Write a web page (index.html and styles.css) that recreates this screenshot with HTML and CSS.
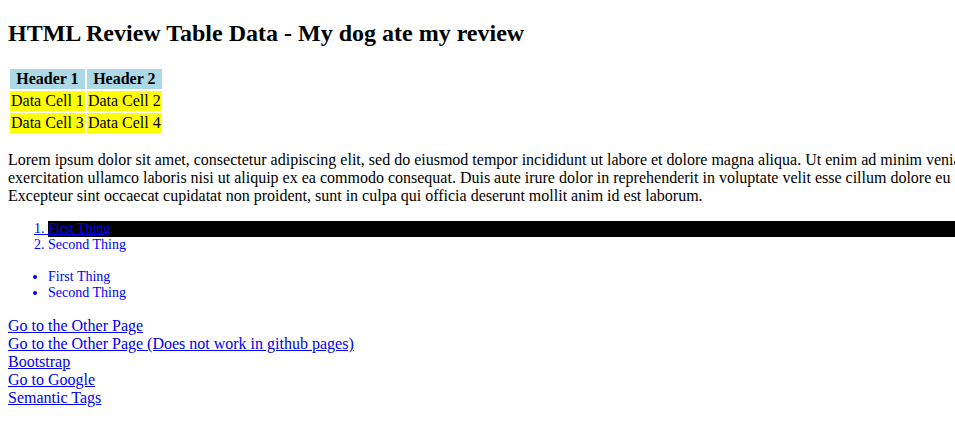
FILE: index.html
```html
<!DOCTYPE html>
<html lang="en">
<head>
<meta charset="utf-8">
<title>HTML Review</title>
<link rel="stylesheet" href="styles.css">
</head>
<body>
<div class="frame">
<div class="page">
  <h1 class="title">HTML Review Table Data - My dog ate my review</h1>
  <table class="data">
    <tr><th>Header 1</th><th>Header 2</th></tr>
    <tr><td>Data Cell 1</td><td>Data Cell 2</td></tr>
    <tr><td>Data Cell 3</td><td>Data Cell 4</td></tr>
  </table>
  <p class="lorem">Lorem ipsum dolor sit amet, consectetur adipiscing elit, sed do eiusmod tempor incididunt ut labore et dolore magna aliqua. Ut enim ad minim veniam, quis nostrud exercitation ullamco laboris nisi ut aliquip ex ea commodo consequat. Duis aute irure dolor in reprehenderit in voluptate velit esse cillum dolore eu fugiat nulla pariatur. Excepteur sint occaecat cupidatat non proident, sunt in culpa qui officia deserunt mollit anim id est laborum.</p>
  <ol class="things">
    <li class="highlight"><a href="#">First Thing</a></li>
    <li>Second Thing</li>
  </ol>
  <ul class="things">
    <li>First Thing</li>
    <li>Second Thing</li>
  </ul>
  <div class="links">
    <a href="#">Go to the Other Page</a>
    <a href="#">Go to the Other Page (Does not work in github pages)</a>
    <a href="#">Bootstrap</a>
    <a href="#">Go to Google</a>
    <a href="#">Semantic Tags</a>
  </div>
</div>
</div>
</body>
</html>
```
FILE: styles.css
```css
body {
  margin: 8px 0 8px 8px;
  font-family: "Liberation Serif", "Times New Roman", serif;
  font-size: 16px;
  color: #000;
}
.frame {
  overflow: hidden;
}
.page {
  width: 1110px;
}
.title {
  font-size: 24px;
  font-weight: bold;
  margin: 12px 0 19.92px;
}
.data th {
  background: #add8e6;
}
.data td {
  background: #ffff00;
}
.lorem {
  margin: 16px 0;
}
.things {
  color: #0000ff;
  margin: 16px 0;
  padding-left: 40px;
}
.things li {
  font-size: 14px;
}
.things a {
  color: #0000ee;
}
.highlight {
  list-style: none;
  background: #000;
  text-decoration: underline;
}
.highlight::before {
  content: "1. ";
  margin-left: -14px;
  color: #0000ff;
}
.links {
  margin-bottom: 8px;
}
.links a {
  display: block;
  width: max-content;
  color: #0000ee;
}
```
